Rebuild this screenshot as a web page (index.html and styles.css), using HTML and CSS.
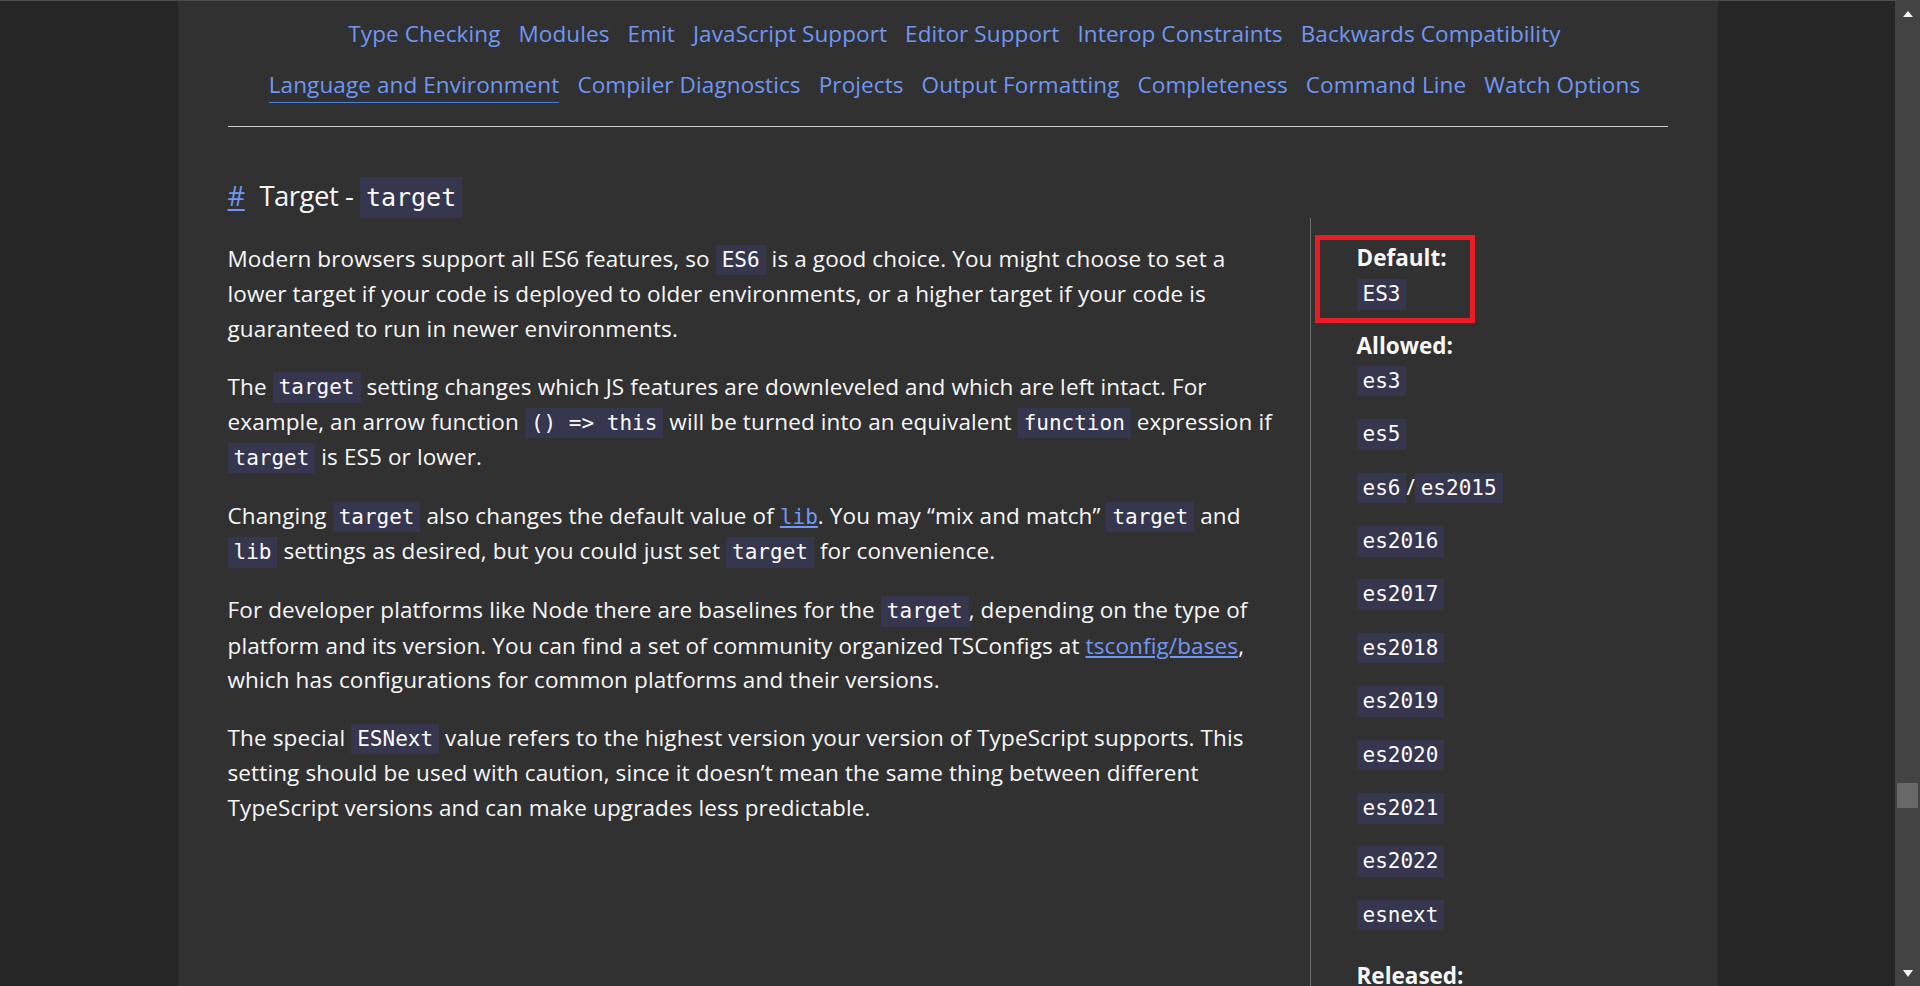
FILE: index.html
```html
<!DOCTYPE html>
<html lang="en">
<head>
<meta charset="utf-8">
<title>TSConfig Reference - target</title>
<link rel="stylesheet" href="styles.css">
</head>
<body>
<div class="window">
  <div class="viewport">
    <div class="panel">
      <div class="container">
        <nav class="categories">
          <div class="cat-row">
            <a href="#">Type Checking</a>
            <a href="#">Modules</a>
            <a href="#">Emit</a>
            <a href="#">JavaScript Support</a>
            <a href="#">Editor Support</a>
            <a href="#">Interop Constraints</a>
            <a href="#">Backwards Compatibility</a>
          </div>
          <div class="cat-row">
            <a class="active" href="#">Language and Environment</a>
            <a href="#">Compiler Diagnostics</a>
            <a href="#">Projects</a>
            <a href="#">Output Formatting</a>
            <a href="#">Completeness</a>
            <a href="#">Command Line</a>
            <a href="#">Watch Options</a>
          </div>
        </nav>
        <hr class="divider">
        <section class="option">
          <h3 class="option-title"><a class="anchor" href="#">#</a> Target - <code>target</code></h3>
          <div class="option-body">
            <div class="markdown">
              <p>Modern browsers support all ES6 features, so <code>ES6</code> is a good choice. You might choose to set a lower target if your code is deployed to older environments, or a higher target if your code is guaranteed to run in newer environments.</p>
              <p>The <code>target</code> setting changes which JS features are downleveled and which are left intact. For example, an arrow function <code>() =&gt; this</code> will be turned into an equivalent <code>function</code> expression if <code>target</code> is ES5 or lower.</p>
              <p>Changing <code>target</code> also changes the default value of <a class="code-link" href="#">lib</a>. You may “mix and match” <code>target</code> and <code>lib</code> settings as desired, but you could just set <code>target</code> for convenience.</p>
              <p>For developer platforms like Node there are baselines for the <code>target</code>, depending on the type of platform and its version. You can find a set of community organized TSConfigs at <a href="#">tsconfig/bases</a>, which has configurations for common platforms and their versions.</p>
              <p>The special <code>ESNext</code> value refers to the highest version your version of TypeScript supports. This setting should be used with caution, since it doesn’t mean the same thing between different TypeScript versions and can make upgrades less predictable.</p>
            </div>
            <aside class="meta">
              <div class="meta-group default">
                <div class="meta-label">Default:</div>
                <div class="meta-value"><code>ES3</code></div>
                <span class="highlight"></span>
              </div>
              <div class="meta-group">
                <div class="meta-label">Allowed:</div>
                <ul class="allowed">
                  <li><code>es3</code></li>
                  <li><code>es5</code></li>
                  <li><code>es6</code>/<code>es2015</code></li>
                  <li><code>es2016</code></li>
                  <li><code>es2017</code></li>
                  <li><code>es2018</code></li>
                  <li><code>es2019</code></li>
                  <li><code>es2020</code></li>
                  <li><code>es2021</code></li>
                  <li><code>es2022</code></li>
                  <li><code>esnext</code></li>
                </ul>
              </div>
              <div class="meta-group released">
                <div class="meta-label">Released:</div>
              </div>
            </aside>
          </div>
        </section>
      </div>
    </div>
  </div>
  <div class="scrollbar">
    <span class="arrow up"></span>
    <div class="track"><span class="thumb"></span></div>
    <span class="arrow down"></span>
  </div>
</div>
</body>
</html>
```
FILE: styles.css
```css
* { box-sizing: border-box; }

html, body {
  margin: 0;
  padding: 0;
  height: 100%;
}

body {
  background: #262626;
  color: #f7f7f7;
  font-family: "Open Sans", "Noto Sans", sans-serif;
  font-size: 22.5px;
  overflow: hidden;
}

.window {
  display: flex;
  height: 986px;
}

.viewport {
  flex: 1;
  display: flex;
  justify-content: center;
  border-top: 1px solid #4e4e4e;
  background: #262626;
  overflow: hidden;
}

.panel {
  width: 1540px;
  height: 100%;
  background: #313131;
  padding: 0 50px;
}

.container {
  width: 1440px;
}

/* category navigation */
.categories {
  padding-top: 14.5px;
}

.cat-row {
  display: flex;
  justify-content: center;
  gap: 18px;
  padding-left: 14px;
  line-height: 35.5px;
  letter-spacing: 0.1px;
}

.cat-row + .cat-row {
  margin-top: 15.5px;
}

.cat-row a {
  color: #7097f5;
  text-decoration: none;
  white-space: nowrap;
}

.cat-row a.active {
  border-bottom: 1px solid #4d80e0;
}

.divider {
  margin: 23px 0 0;
  border: 0;
  border-top: 1px solid #cdcdcd;
  height: 0;
}

/* option */
.option-title {
  margin: 47.5px 0 0;
  font-size: 27.5px;
  font-weight: 400;
  line-height: 41px;
  letter-spacing: -0.5px;
}

.option-title .anchor {
  color: #7097f5;
  text-decoration: underline;
  text-underline-offset: 3px;
  margin-right: 8px;
}

.option-title code {
  font-size: 25px;
  padding: 6px 6px;
}

code {
  font-family: "DejaVu Sans Mono", "Liberation Mono", monospace;
  font-size: 21px;
  letter-spacing: 0;
  background: #36364f;
  color: #fbfbfb;
  padding: 3.3px 6px;
}

.option-body {
  display: flex;
}

.markdown {
  width: 1082px;
  padding: 24.5px 32px 0 0;
  line-height: 34.3px;
  letter-spacing: 0.12px;
}

.markdown p {
  margin: 0 0 23.7px;
}

.markdown a {
  color: #7097f5;
  text-decoration: underline;
}

.markdown a.code-link {
  font-family: "DejaVu Sans Mono", "Liberation Mono", monospace;
  font-size: 21px;
  letter-spacing: 0;
}

/* metadata sidebar */
.meta {
  width: 358px;
  min-height: 800px;
  border-left: 1px solid #6f6f6f;
  padding: 22.5px 0 0 46px;
  line-height: 35.5px;
}

.meta-label {
  font-weight: 700;
}

.meta-group {
  position: relative;
}

.meta-group + .meta-group {
  margin-top: 15.4px;
}

.meta-group.released {
  margin-top: 24.4px;
}

.allowed {
  list-style: none;
  margin: -1.8px 0 0;
  padding: 0;
}

.allowed li + li {
  margin-top: 15.9px;
}

.highlight {
  position: absolute;
  top: -5.5px;
  left: -42px;
  width: 160px;
  height: 88px;
  border: 5px solid #ec1c24;
}

/* fake window scrollbar */
.scrollbar {
  width: 25px;
  background: #434343;
  display: flex;
  flex-direction: column;
  align-items: center;
  position: relative;
}

.arrow {
  width: 0;
  height: 0;
  border-left: 5.5px solid transparent;
  border-right: 5.5px solid transparent;
}

.arrow.up {
  margin-top: 11px;
  border-bottom: 6px solid #f2f2f2;
}

.arrow.down {
  margin-bottom: 9px;
  border-top: 7px solid #f2f2f2;
}

.track {
  flex: 1;
  width: 100%;
  position: relative;
}

.thumb {
  position: absolute;
  top: 766px;
  left: 2px;
  right: 2px;
  height: 25px;
  background: #686868;
}
```
